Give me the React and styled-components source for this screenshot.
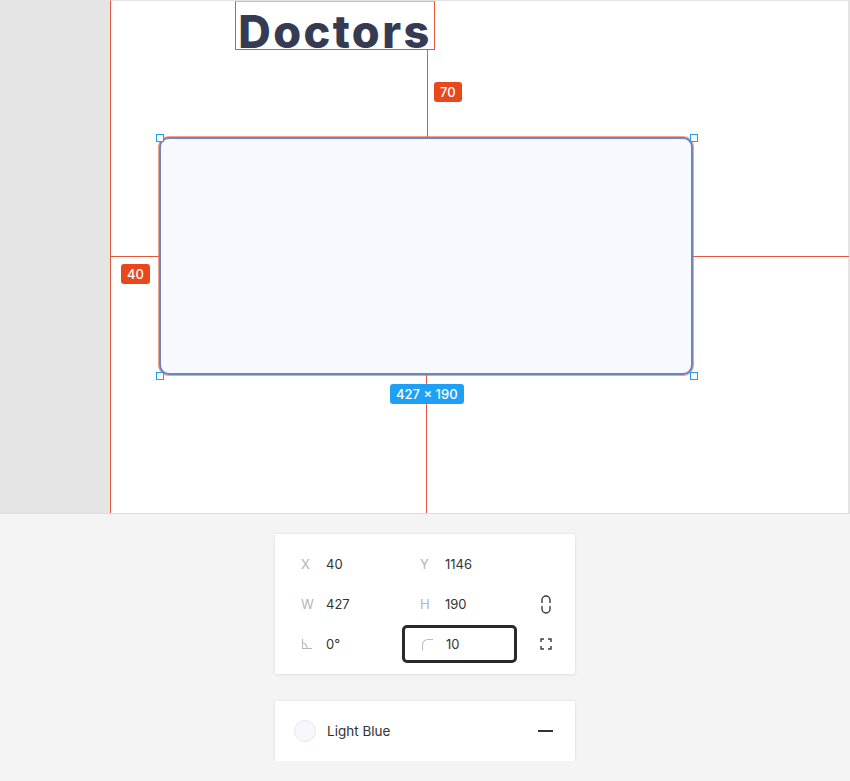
import React from 'react';
import styled, { createGlobalStyle } from 'styled-components';

const GlobalStyle = createGlobalStyle`
  body {
    margin: 0;
    background: #f4f4f4;
    font-family: Inter, "Liberation Sans", sans-serif;
  }
`;

const RED = '#e4573a';
const BLUE = '#1ea0f5';

const Page = styled.div`
  width: 850px;
  display: flex;
  flex-direction: column;
`;

const Stage = styled.div`
  height: 513px;
  display: flex;
  border-bottom: 1px solid #dedede;
  background: #e5e5e5;
`;

const Gutter = styled.div`
  width: 110px;
  flex-shrink: 0;
`;

const Frame = styled.div`
  flex: 1;
  position: relative;
  background: #ffffff;
  border-left: 1px solid ${RED};
  border-top: 1px solid #e4e4e4;
  border-right: 2px solid #e4e4e4;
`;

const TitleBox = styled.div`
  position: absolute;
  left: 124px;
  top: 0;
  width: 198px;
  height: 47px;
  border: 1px solid ${RED};
  border-top-color: #f0b0a0;
`;

const Title = styled.div`
  font-family: Inter, "Liberation Sans", sans-serif;
  font-weight: 800;
  font-size: 45px;
  letter-spacing: 2.4px;
  line-height: 47px;
  padding-top: 6px;
  text-align: center;
  color: #363b54;
  white-space: nowrap;
`;

const Guide = styled.div`
  position: absolute;
  background: ${RED};
`;

const Badge = styled.div`
  position: absolute;
  height: 20px;
  padding: 0 6px;
  border-radius: 3px;
  background: ${p => (p.$blue ? BLUE : '#e8481c')};
  color: #fff;
  font-size: 13px;
  font-weight: 500;
  line-height: 20px;
  white-space: nowrap;
`;

const Shape = styled.div`
  position: absolute;
  left: 48px;
  top: 136px;
  width: 534px;
  height: 238px;
  box-sizing: border-box;
  background: #f6f9fd;
  border: 2px solid #7384ba;
  border-radius: 10px;
  box-shadow: 0 0 0 1px rgba(228, 87, 58, 0.55);
`;

const Handle = styled.div`
  position: absolute;
  width: 8px;
  height: 8px;
  box-sizing: border-box;
  background: #fff;
  border: 1px solid ${BLUE};
`;

const Panels = styled.div`
  display: flex;
  flex-direction: column;
  align-items: center;
  gap: 27px;
  padding-top: 20px;
`;

const Panel = styled.div`
  width: 300px;
  background: #fff;
  box-shadow: 0 1px 4px rgba(0, 0, 0, 0.06), 0 0 0 1px rgba(0, 0, 0, 0.025);
`;

const Grid = styled.div`
  display: grid;
  grid-template-columns: 115px 115px 1fr;
  column-gap: 4px;
  row-gap: 2px;
  padding: 11px 8px;
`;

const Cell = styled.div`
  height: 38px;
  box-sizing: border-box;
  display: flex;
  align-items: center;
  padding-left: ${p => (p.$active ? 16 : 18)}px;
  border: ${p => (p.$active ? '3px solid #2a2a2a' : 'none')};
  border-radius: 5px;
  font-size: 13px;
`;

const IconCell = styled.div`
  height: 38px;
  display: flex;
  align-items: center;
  justify-content: center;
  padding-left: 4px;
  color: #3a3a3a;
`;

const Label = styled.span`
  width: 25px;
  color: #b4b4b4;
  display: flex;
  align-items: center;
`;

const Value = styled.span`
  color: #333;
`;

const FillRow = styled.div`
  height: 60px;
  display: flex;
  align-items: center;
  padding: 0 22px 0 19px;
  font-size: 13.5px;
  color: #333;
`;

const Swatch = styled.span`
  width: 20px;
  height: 20px;
  border-radius: 50%;
  background: #f6f8fd;
  border: 1px solid #e4e8ef;
  margin-right: 11px;
`;

const FillName = styled.span`
  flex: 1;
`;

const Minus = styled.span`
  width: 15px;
  height: 1.5px;
  background: #333;
`;

const AngleIcon = () => (
  <svg width="12" height="12" viewBox="0 0 12 12" fill="none" stroke="#b8b8b8" strokeWidth="1.1">
    <path d="M1.5 1 V10.5 H11" />
    <path d="M1.5 4.5 A6 6 0 0 1 6 10.5" />
  </svg>
);

const RadiusIcon = () => (
  <svg width="13" height="13" viewBox="0 0 13 13" fill="none" stroke="#bcbcbc" strokeWidth="1.1">
    <path d="M1.5 12.5 V7 A5.5 5.5 0 0 1 7 1.5 H12" />
  </svg>
);

const LinkIcon = () => (
  <svg width="12" height="19" viewBox="0 0 12 19" fill="none" stroke="#3a3a3a" strokeWidth="1.4" strokeLinecap="round">
    <path d="M2 7.5 V5 A4 4 0 0 1 10 5 V7.5" />
    <path d="M2 11.5 V14 A4 4 0 0 0 10 14 V11.5" />
  </svg>
);

const ExpandIcon = () => (
  <svg width="12" height="12" viewBox="0 0 12 12" fill="none" stroke="#3a3a3a" strokeWidth="1.4">
    <path d="M1 4 V1 H4" />
    <path d="M8 1 H11 V4" />
    <path d="M11 8 V11 H8" />
    <path d="M4 11 H1 V8" />
  </svg>
);

const handles = [
  [45, 133],
  [579, 133],
  [45, 371],
  [579, 371],
];

const App = () => (
  <>
    <GlobalStyle />
    <Page>
      <Stage>
        <Gutter />
        <Frame>
          <TitleBox>
            <Title>Doctors</Title>
          </TitleBox>

          <Guide style={{ left: 316, top: 48, width: 1, height: 88 }} />
          <Badge style={{ left: 323, top: 81 }}>70</Badge>

          <Guide style={{ left: -1, top: 255, width: 49, height: 1 }} />
          <Guide style={{ left: 582, top: 255, width: 156, height: 1 }} />
          <Badge style={{ left: 10, top: 263 }}>40</Badge>

          <Guide style={{ left: 315, top: 374, width: 1, height: 138 }} />

          <Shape />
          {handles.map(([x, y], i) => (
            <Handle key={i} style={{ left: x, top: y }} />
          ))}
          <Badge $blue style={{ left: 279, top: 383 }}>427 × 190</Badge>
        </Frame>
      </Stage>

      <Panels>
        <Panel>
          <Grid>
            <Cell><Label>X</Label><Value>40</Value></Cell>
            <Cell><Label>Y</Label><Value>1146</Value></Cell>
            <IconCell />
            <Cell><Label>W</Label><Value>427</Value></Cell>
            <Cell><Label>H</Label><Value>190</Value></Cell>
            <IconCell><LinkIcon /></IconCell>
            <Cell><Label><AngleIcon /></Label><Value>0°</Value></Cell>
            <Cell $active><Label><RadiusIcon /></Label><Value>10</Value></Cell>
            <IconCell><ExpandIcon /></IconCell>
          </Grid>
        </Panel>
        <Panel>
          <FillRow>
            <Swatch />
            <FillName>Light Blue</FillName>
            <Minus />
          </FillRow>
        </Panel>
      </Panels>
    </Page>
  </>
);

export default App;
